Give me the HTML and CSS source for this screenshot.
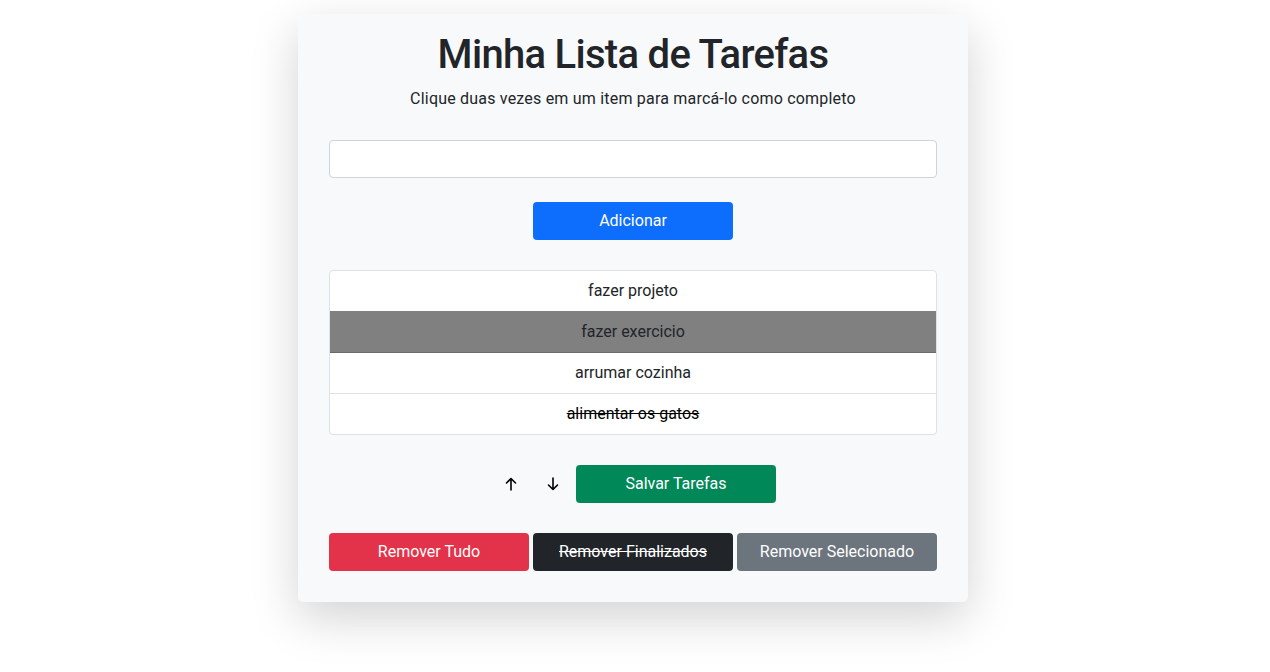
FILE: index.html
```html
<!DOCTYPE html>
<html lang="pt-BR">
<head>
<meta charset="utf-8">
<title>Minha Lista de Tarefas</title>
<link rel="stylesheet" href="styles.css">
</head>
<body>
<main class="card">
  <h1 class="title">Minha Lista de Tarefas</h1>
  <p class="subtitle">Clique duas vezes em um item para marcá-lo como completo</p>
  <input class="task-input" type="text" aria-label="Nova tarefa">
  <div class="center-row">
    <button class="btn btn-primary">Adicionar</button>
  </div>
  <ul class="list">
    <li class="item">fazer projeto</li>
    <li class="item selected">fazer exercicio</li>
    <li class="item">arrumar cozinha</li>
    <li class="item done">alimentar os gatos</li>
  </ul>
  <div class="center-row actions">
    <button class="btn-arrow" aria-label="Mover para cima">
      <svg width="12" height="14" viewBox="0 0 12 14" fill="none" stroke="#000" stroke-width="1.6" stroke-linecap="round" stroke-linejoin="round"><path d="M6 13V1.5M1.5 6L6 1.5 10.5 6"/></svg>
    </button>
    <button class="btn-arrow" aria-label="Mover para baixo">
      <svg width="12" height="14" viewBox="0 0 12 14" fill="none" stroke="#000" stroke-width="1.6" stroke-linecap="round" stroke-linejoin="round"><path d="M6 1v11.5M1.5 8L6 12.5 10.5 8"/></svg>
    </button>
    <button class="btn btn-success">Salvar Tarefas</button>
  </div>
  <div class="remove-row">
    <button class="btn btn-danger">Remover Tudo</button>
    <button class="btn btn-dark"><s>Remover Finalizados</s></button>
    <button class="btn btn-secondary">Remover Selecionado</button>
  </div>
</main>
</body>
</html>
```

FILE: styles.css
```css
* { box-sizing: border-box; }
html, body { margin: 0; padding: 0; }
body {
  min-height: 100vh;
  padding: 14px 4px 0 0;
  background: #ffffff;
  font-family: Roboto, "Liberation Sans", sans-serif;
  font-size: 16px;
  line-height: 1.5;
  color: #212529;
}
.card {
  width: 670px;
  margin: 0 auto;
  padding: 17px 31px 31px;
  background: #f8f9fa;
  border-radius: 5px;
  box-shadow: 0 16px 48px rgba(0, 0, 0, 0.175);
  text-align: center;
}
.title {
  margin: 0 0 8px;
  font-size: 40px;
  font-weight: 500;
  line-height: 48px;
  letter-spacing: -0.7px;
}
.subtitle {
  margin: 0 0 29px;
  font-size: 16px;
  line-height: 24px;
  letter-spacing: 0.2px;
}
.task-input {
  display: block;
  width: 100%;
  height: 38px;
  padding: 6px 12px;
  border: 1px solid #ced4da;
  border-radius: 4px;
  background: #fff;
  font: inherit;
}
.center-row {
  display: flex;
  justify-content: center;
  margin-top: 24px;
}
.btn {
  height: 38px;
  width: 200px;
  border: 1px solid transparent;
  border-radius: 4px;
  padding: 6px 12px;
  font: inherit;
  color: #fff;
  cursor: pointer;
}
.btn-primary { background: #0d6efd; }
.btn-success { background: #008858; }
.btn-danger { background: #e2334a; }
.btn-dark { background: #212529; }
.btn-secondary { background: #6c757d; }
.btn s { text-decoration: line-through; }
.list {
  list-style: none;
  margin: 30px 0 0;
  padding: 0;
  border: 1px solid #dee2e6;
  border-radius: 4px;
  background: #fff;
  overflow: hidden;
}
.item {
  padding: 8px 16px;
  line-height: 24px;
  border-top: 1px solid #dee2e6;
}
.item:first-child { border-top: none; }
.item.selected {
  background: #808080;
  border-top-color: #808080;
  border-bottom: 1px solid #6a6a6a;
  margin-bottom: -1px;
  position: relative;
}
.item.done { text-decoration: line-through; color: #000; }
.actions {
  margin-top: 30px;
  align-items: center;
}
.btn-arrow {
  display: flex;
  align-items: center;
  justify-content: center;
  width: 42px;
  height: 38px;
  border: none;
  background: transparent;
  padding: 0;
  cursor: pointer;
}
.btn-arrow + .btn { margin-left: 2px; }
.remove-row {
  display: flex;
  gap: 4px;
  margin-top: 30px;
}
```
